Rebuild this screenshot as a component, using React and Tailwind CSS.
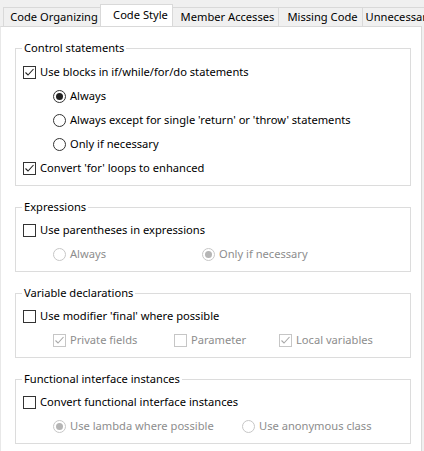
function CheckBox({ checked, disabled }) {
  return (
    <svg width="13" height="13" viewBox="0 0 13 13" className="shrink-0">
      <rect x="0.5" y="0.5" width="12" height="12" fill="white" stroke={disabled ? '#c6c6c6' : '#333333'} />
      {checked && (
        <path
          d="M2.5 6.5 L5 9 L10.5 3"
          fill="none"
          stroke={disabled ? '#a8a8a8' : '#222222'}
          strokeWidth="1.1"
        />
      )}
    </svg>
  );
}

function Radio({ checked, disabled }) {
  return (
    <svg width="13" height="13" viewBox="0 0 13 13" className="shrink-0">
      <circle cx="6.5" cy="6.5" r="6" fill="white" stroke={disabled ? '#c6c6c6' : '#333333'} />
      {checked && <circle cx="6.5" cy="6.5" r="3.5" fill={disabled ? '#b5b5b5' : '#222222'} />}
    </svg>
  );
}

function Option({ type = 'check', checked, disabled, label, className = '' }) {
  return (
    <div className={`flex h-6 shrink-0 items-center ${className}`}>
      {type === 'check' ? <CheckBox checked={checked} disabled={disabled} /> : <Radio checked={checked} disabled={disabled} />}
      <span className={`ml-1 whitespace-nowrap ${disabled ? 'text-[#8d8d8d]' : 'text-black'}`}>{label}</span>
    </div>
  );
}

function Group({ title, first, children }) {
  return (
    <fieldset className="w-[396px] border border-[#dcdcdc] pb-[5px]">
      <legend className="ml-[6px] px-[2px] leading-4 text-black">{title}</legend>
      <div className={`flex flex-col pl-[7px] ${first ? 'pt-[4px]' : 'pt-[3px]'}`}>{children}</div>
    </fieldset>
  );
}

function Tab({ label, width, selected }) {
  if (selected) {
    return (
      <div
        className={`relative z-10 -mb-px -ml-px flex h-[23px] shrink-0 items-center justify-center border border-b-0 border-[#d9d9d9] bg-white pl-[8px] ${width}`}
      >
        <span className="-mt-[2px] whitespace-nowrap">{label}</span>
      </div>
    );
  }
  return (
    <div
      className={`-ml-px flex h-[19px] shrink-0 items-center justify-center border border-b-0 border-[#d9d9d9] bg-[#f0f0f0] pl-[4px] ${width}`}
    >
      <span className="whitespace-nowrap">{label}</span>
    </div>
  );
}

export default function App() {
  return (
    <div className="h-[451px] w-[424px] overflow-hidden bg-[#f0f0f0] font-['Noto_Sans',sans-serif] text-[11.15px] text-black">
      <div className="flex h-[26px] w-[424px] items-end overflow-hidden pl-[4px]">
        <Tab label="Code Organizing" width="w-[98px]" />
        <Tab label="Code Style" width="w-[73px]" selected />
        <Tab label="Member Accesses" width="w-[107px]" />
        <Tab label="Missing Code" width="w-[85px]" />
        <Tab label="Unnecessary Code" width="w-[100px]" />
      </div>

      <div className="flex h-[430px] w-[422px] flex-col gap-[13px] border border-l-[#e8e8e8] border-[#d9d9d9] bg-white pl-[14px] pt-[13px]">
        <Group title="Control statements" first>
          <Option checked label="Use blocks in if/while/for/do statements" />
          <Option type="radio" checked label="Always" className="pl-[30px]" />
          <Option type="radio" label="Always except for single 'return' or 'throw' statements" className="pl-[30px]" />
          <Option type="radio" label="Only if necessary" className="pl-[30px]" />
          <Option checked label="Convert 'for' loops to enhanced" />
        </Group>

        <Group title="Expressions">
          <Option label="Use parentheses in expressions" />
          <div className="flex pl-[30px]">
            <Option type="radio" disabled label="Always" className="w-[149px]" />
            <Option type="radio" checked disabled label="Only if necessary" />
          </div>
        </Group>

        <Group title="Variable declarations">
          <Option label="Use modifier 'final' where possible" />
          <div className="flex pl-[30px]">
            <Option checked disabled label="Private fields" className="w-[121px]" />
            <Option disabled label="Parameter" className="w-[105px]" />
            <Option checked disabled label="Local variables" />
          </div>
        </Group>

        <Group title="Functional interface instances">
          <Option label="Convert functional interface instances" />
          <div className="flex pl-[30px]">
            <Option type="radio" checked disabled label="Use lambda where possible" className="w-[189px]" />
            <Option type="radio" disabled label="Use anonymous class" />
          </div>
        </Group>
      </div>
    </div>
  );
}
